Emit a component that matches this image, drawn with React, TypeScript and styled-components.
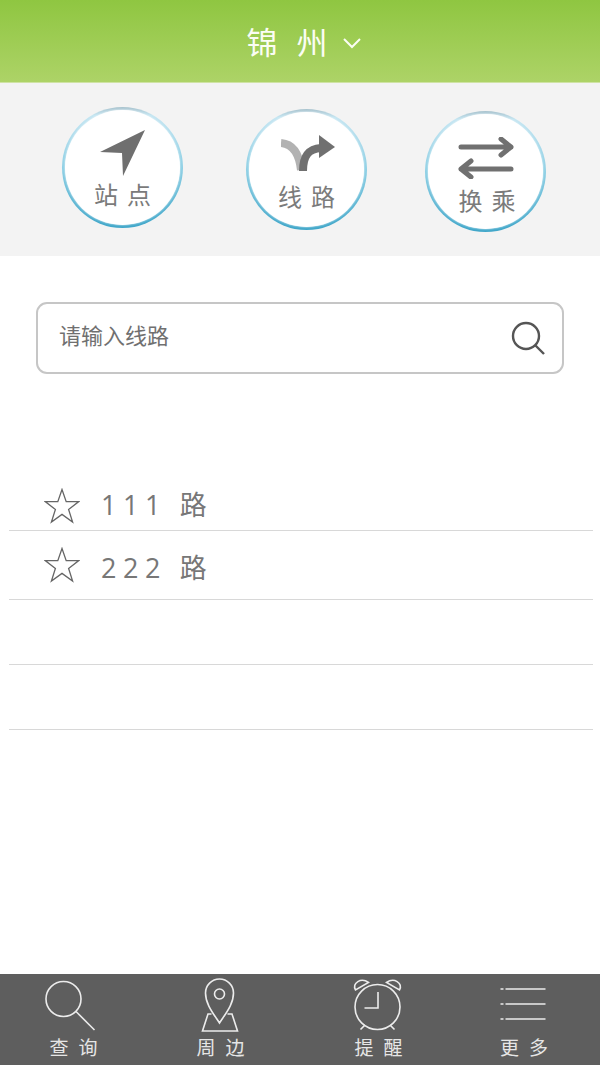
import React from "react";
import styled, { createGlobalStyle } from "styled-components";

const cjk = `"Noto Sans CJK SC", "Noto Sans", sans-serif`;

const GlobalStyle = createGlobalStyle`
  html, body {
    margin: 0;
    padding: 0;
    background: #fff;
  }
  * {
    box-sizing: border-box;
  }
`;

const Page = styled.div`
  width: 600px;
  height: 1065px;
  display: flex;
  flex-direction: column;
  overflow: hidden;
  background: #fff;
  font-family: ${cjk};
`;

const Header = styled.header`
  height: 83px;
  flex-shrink: 0;
  display: flex;
  justify-content: center;
  align-items: center;
  gap: 5px;
  padding: 6px 0 8px 8px;
  background: linear-gradient(#8fc641, #add367);
  border-bottom: 1px solid #cfe3a4;
`;

const City = styled.span`
  font-size: 31px;
  font-weight: 400;
  line-height: 1;
  letter-spacing: 19px;
  margin-right: -10px;
  color: #fbfdf4;
`;

const Chevron = styled.svg`
  width: 20px;
  height: 12px;
  margin-top: 5px;
`;

const Shortcuts = styled.nav`
  height: 173px;
  flex-shrink: 0;
  display: flex;
  align-items: flex-start;
  padding: 24px 0 0 62px;
  background: #f3f3f3;
`;

const Shortcut = styled.button<{ $top: number; $gap: number }>`
  width: 121px;
  height: 121px;
  flex-shrink: 0;
  margin-top: ${(p) => p.$top}px;
  margin-right: ${(p) => p.$gap}px;
  padding: 3px;
  border: none;
  border-radius: 50%;
  background: linear-gradient(#a9c3ce 0%, #c6e6f2 7%, #8fd0e5 50%, #3fa6c9 100%);
  cursor: pointer;
`;

const Face = styled.span`
  width: 100%;
  height: 100%;
  display: flex;
  flex-direction: column;
  align-items: center;
  border-radius: 50%;
  background: #fff;
  box-shadow: 0 0 2px #fff;
`;

const IconSlot = styled.span<{ $height: number; $shift?: number }>`
  height: ${(p) => p.$height}px;
  margin-left: ${(p) => p.$shift ?? 0}px;
  display: flex;
  align-items: flex-end;
  justify-content: center;
  flex-shrink: 0;
`;

const ShortcutLabel = styled.span<{ $gap: number; $shift?: number }>`
  margin-top: ${(p) => p.$gap}px;
  margin-left: ${(p) => p.$shift ?? 0}px;
  padding-left: 9px;
  font-family: ${cjk};
  font-size: 24px;
  font-weight: 400;
  line-height: 32px;
  letter-spacing: 9px;
  color: #7b7b7b;
  white-space: nowrap;
`;

const Content = styled.main`
  flex: 1;
  padding: 46px 7px 0 9px;
`;

const SearchBox = styled.div`
  height: 72px;
  margin: 0 29px 0 27px;
  display: flex;
  align-items: center;
  justify-content: space-between;
  padding: 0 17px 0 21px;
  border: 2px solid #c6c6c6;
  border-radius: 11px;
  background: #fff;
`;

const Placeholder = styled.span`
  margin-bottom: 8px;
  font-size: 22px;
  font-weight: 400;
  color: #707070;
`;

const SearchIcon = styled.svg`
  margin: 0 0 1px;
`;

const RouteList = styled.ul`
  list-style: none;
  margin: 92px 0 0;
  padding: 0;
`;

const RouteRow = styled.li<{ $height: number; $lift: number }>`
  height: ${(p) => p.$height}px;
  display: flex;
  align-items: flex-end;
  gap: 21px;
  padding: 0 0 ${(p) => p.$lift}px 35px;
  border-bottom: 1px solid #d8d8d8;
`;

const RouteName = styled.span<{ $drop: number }>`
  margin-bottom: ${(p) => -p.$drop}px;
  font-size: 27px;
  font-weight: 400;
  line-height: 36px;
  letter-spacing: 6.5px;
  white-space: pre;
  color: #777;
`;

const RouteNumber = styled.span`
  font-family: "Open Sans", sans-serif;
  font-size: 27px;
  margin-right: 13px;
`;

const TabBar = styled.footer`
  height: 91px;
  flex-shrink: 0;
  display: flex;
  background: #5e5e5e;
`;

const Tab = styled.button<{ $gap?: number }>`
  width: 147px;
  height: 91px;
  flex-shrink: 0;
  margin-left: ${(p) => p.$gap ?? 0}px;
  padding: 1px 0 0;
  display: flex;
  flex-direction: column;
  align-items: center;
  border: none;
  background: none;
  cursor: pointer;
`;

const TabIcon = styled.svg`
  width: 60px;
  height: 60px;
  flex-shrink: 0;
  fill: none;
  stroke: #ececec;
  stroke-width: 1.6;
`;

const TabLabel = styled.span<{ $shift?: number }>`
  margin-top: -1px;
  margin-left: ${(p) => p.$shift ?? 0}px;
  padding-left: 10px;
  font-family: ${cjk};
  font-size: 19px;
  font-weight: 400;
  line-height: 26px;
  letter-spacing: 10px;
  color: #e6e6e6;
  white-space: nowrap;
`;

const Star = () => (
  <svg width="36" height="36" viewBox="0 0 36 36" fill="none" stroke="#666" strokeWidth="1.3">
    <path d="M18 1.5 L22.2 13.6 L34.8 13.6 L24.6 21.4 L28.6 34 L18 26.4 L7.4 34 L11.4 21.4 L1.2 13.6 L13.8 13.6 Z" />
  </svg>
);

const routes = [
  { number: "111", height: 65, lift: 6, drop: -1 },
  { number: "222", height: 69, lift: 16, drop: 3 },
  { number: "", height: 65, lift: 0, drop: 0 },
  { number: "", height: 65, lift: 0, drop: 0 },
];

export default function App() {
  return (
    <Page>
      <GlobalStyle />
      <Header>
        <City>锦州</City>
        <Chevron viewBox="0 0 20 12" fill="none" stroke="#fbfdf4" strokeWidth="2">
          <path d="M2 2 L10 10 L18 2" />
        </Chevron>
      </Header>

      <Shortcuts>
        <Shortcut $top={0} $gap={63}>
          <Face>
            <IconSlot $height={66}>
              <svg width="46" height="46" viewBox="0 0 46 46">
                <path d="M45 0 L0 22 L22 23 L23 46 Z" fill="#6f6f6f" />
              </svg>
            </IconSlot>
            <ShortcutLabel $gap={2}>站点</ShortcutLabel>
          </Face>
        </Shortcut>
        <Shortcut $top={2} $gap={58}>
          <Face>
            <IconSlot $height={60} $shift={3}>
              <svg width="54" height="38" viewBox="0 0 54 38" fill="none">
                <path d="M0 9 C11 10 18 18 20 36" stroke="#b2b2b2" strokeWidth="8" />
                <path d="M22 37 C22 22 27 15 40 14" stroke="#707070" strokeWidth="8" />
                <path d="M38 1 L54 13 L38 24 Z" fill="#707070" />
              </svg>
            </IconSlot>
            <ShortcutLabel $gap={8}>线路</ShortcutLabel>
          </Face>
        </Shortcut>
        <Shortcut $top={4} $gap={0}>
          <Face>
            <IconSlot $height={65}>
              <svg width="56" height="42" viewBox="0 0 56 42" fill="none" stroke="#707070" strokeWidth="5" strokeLinecap="round" strokeLinejoin="round">
                <path d="M3 10 H53 M43 2 L53 10 L43 18" />
                <path d="M53 32 H3 M13 24 L3 32 L13 40" />
              </svg>
            </IconSlot>
            <ShortcutLabel $gap={5} $shift={3}>换乘</ShortcutLabel>
          </Face>
        </Shortcut>
      </Shortcuts>

      <Content>
        <SearchBox>
          <Placeholder>请输入线路</Placeholder>
          <SearchIcon width="34" height="34" viewBox="0 0 34 34" fill="none" stroke="#555" strokeWidth="2.4">
            <circle cx="15" cy="15" r="13" />
            <path d="M24 24 L33 33" />
          </SearchIcon>
        </SearchBox>
        <RouteList>
          {routes.map((route, i) => (
            <RouteRow key={i} $height={route.height} $lift={route.lift}>
              {route.number && (
                <>
                  <Star />
                  <RouteName $drop={route.drop}>
                    <RouteNumber>{route.number}</RouteNumber>路
                  </RouteName>
                </>
              )}
            </RouteRow>
          ))}
        </RouteList>
      </Content>

      <TabBar>
        <Tab>
          <TabIcon viewBox="0 0 60 60">
            <circle cx="19.5" cy="24" r="17.5" />
            <path d="M32 36.5 L50.5 55" />
          </TabIcon>
          <TabLabel>查询</TabLabel>
        </Tab>
        <Tab>
          <TabIcon viewBox="0 0 60 60">
            <path d="M28.5 48 C22 38 14.5 29 14.5 18 A14 14 0 0 1 42.5 18 C42.5 29 35 38 28.5 48 Z" />
            <circle cx="28.5" cy="19" r="5" />
            <path d="M20.5 39 H17 L11.5 56 H46.5 L41 39 H36.5" />
          </TabIcon>
          <TabLabel>周边</TabLabel>
        </Tab>
        <Tab $gap={11}>
          <TabIcon viewBox="0 0 60 60">
            <circle cx="28.5" cy="32" r="22.5" />
            <path d="M29 17 V33 H15.5" />
            <path d="M6.5 15 C3 8 12 2 19.5 7.5 Z" />
            <path d="M50.5 15 C54 8 45 2 37.5 7.5 Z" />
            <path d="M11.5 54.5 L16 50 M45.5 54.5 L41 50" />
          </TabIcon>
          <TabLabel>提醒</TabLabel>
        </Tab>
        <Tab>
          <TabIcon viewBox="0 0 60 60">
            <path d="M9.5 14 H49.5 M9.5 29 H49.5 M9.5 44 H49.5" />
            <path d="M4.5 14 H7.5 M4.5 29 H7.5 M4.5 44 H7.5" />
          </TabIcon>
          <TabLabel $shift={-3}>更多</TabLabel>
        </Tab>
      </TabBar>
    </Page>
  );
}
